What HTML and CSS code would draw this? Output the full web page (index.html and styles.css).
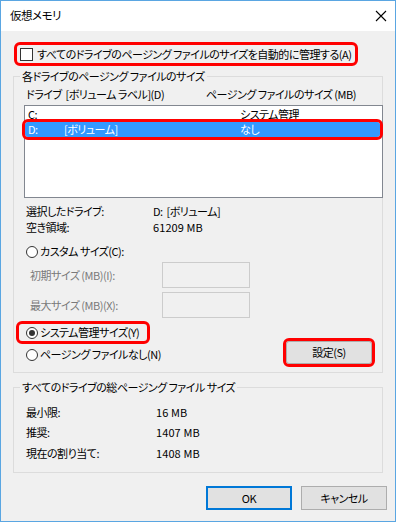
FILE: index.html
```html
<!DOCTYPE html>
<html lang="ja">
<head>
<meta charset="utf-8">
<title>仮想メモリ</title>
<link rel="stylesheet" href="styles.css">
</head>
<body>
<div class="window">
  <div class="titlebar">
    <span class="title">仮想メモリ</span>
    <svg class="close" width="12" height="12" viewBox="0 0 12 12"><path d="M1 1L11 11M11 1L1 11" stroke="#000" stroke-width="1.1" fill="none"/></svg>
  </div>
  <div class="content">
    <div class="check-row mark">
      <span class="checkbox"></span>
      <span class="label">すべてのドライブのページング ファイルのサイズを自動的に管理する(A)</span>
    </div>

    <fieldset class="group g1">
      <legend>各ドライブのページング ファイルのサイズ</legend>
      <div class="list-head">
        <span class="h-drive">ドライブ&nbsp;&nbsp;[ボリューム ラベル](D)</span>
        <span class="h-size">ページング ファイルのサイズ (MB)</span>
      </div>
      <div class="listbox">
        <div class="row"><span class="c-drive">C:</span><span class="c-label"></span><span class="c-size">システム管理</span></div>
        <div class="row sel mark"><span class="c-drive">D:</span><span class="c-label">[ボリューム]</span><span class="c-size">なし</span></div>
      </div>
      <div class="info">
        <span>選択したドライブ:</span><span>D:&nbsp;&nbsp;[ボリューム]</span>
        <span>空き領域:</span><span class="num">61209 MB</span>
      </div>
      <div class="radio-row r-custom"><span class="radio"></span><span>カスタム サイズ(C):</span></div>
      <div class="size-row first">
        <span class="size-label">初期サイズ (MB)(I):</span><span class="textbox"></span>
      </div>
      <div class="size-row">
        <span class="size-label">最大サイズ (MB)(X):</span><span class="textbox"></span>
      </div>
      <div class="radio-row r-system mark"><span class="radio checked"></span><span>システム管理サイズ(Y)</span></div>
      <div class="last-row">
        <div class="radio-row r-none"><span class="radio"></span><span>ページング ファイルなし(N)</span></div>
        <button class="btn set mark">設定(S)</button>
      </div>
    </fieldset>

    <fieldset class="group g2">
      <legend>すべてのドライブの総ページング ファイル サイズ</legend>
      <div class="totals">
        <span>最小限:</span><span class="num">16 MB</span>
        <span>推奨:</span><span class="num">1407 MB</span>
        <span>現在の割り当て:</span><span class="num">1408 MB</span>
      </div>
    </fieldset>

    <div class="buttons">
      <button class="btn ok">OK</button>
      <button class="btn">キャンセル</button>
    </div>
  </div>
</div>
</body>
</html>
```

FILE: styles.css
```css
* { box-sizing: border-box; }
html, body { margin: 0; padding: 0; }
body {
  width: 396px;
  height: 523px;
  font-family: "Noto Sans CJK JP", "Noto Sans", sans-serif;
  font-size: 11px;
  letter-spacing: -0.5px;
  line-height: 15px;
  font-feature-settings: "palt";
  white-space: nowrap;
  color: #000;
  background: #fff;
}
.window {
  width: 396px;
  height: 522px;
  border: 1px solid #5aa6e2;
  display: flex;
  flex-direction: column;
  background: #f0f0f0;
}
.titlebar {
  height: 30px;
  flex: none;
  background: #fff;
  display: flex;
  align-items: center;
  justify-content: space-between;
  padding: 0 8px 2px 9px;
}
.title { font-size: 11.5px; }
.close { display: block; margin-top: 2px; }

.content {
  flex: 1;
  padding: 14px 12px 0 12px;
  display: flex;
  flex-direction: column;
}

.mark {
  outline: 3px solid #ff0000;
  outline-offset: 0;
  border-radius: 3px;
}

.num { letter-spacing: 0.1px; }

.check-row {
  margin-left: 4px;
  width: 338px;
  height: 18px;
  display: flex;
  align-items: center;
  gap: 4px;
  padding-left: 3px;
}
.checkbox {
  width: 13px;
  height: 13px;
  border: 1px solid #333;
  background: #fff;
  flex: none;
}

.group {
  margin: 0;
  padding: 0;
  border: 1px solid #dcdcdc;
  min-width: 0;
}
.group legend {
  padding: 0 2px;
  margin-left: 6px;
  line-height: 15px;
}
.g1 {
  margin-top: 6px;
  padding-bottom: 8px;
}
.list-head {
  display: flex;
  padding-left: 12px;
  margin-top: 3px;
}
.h-drive { width: 180px; }

.listbox {
  margin: 3px 0 0 10px;
  width: 359px;
  height: 93px;
  background: #fff;
  border: 1px solid #828790;
  padding: 1px 2px 0 0;
}
.row {
  height: 15px;
  display: flex;
  padding-left: 3px;
}
.row.sel {
  background: #3399ff;
  color: #fff;
}
.c-drive { width: 36px; }
.c-label { width: 176px; }

.info {
  display: grid;
  grid-template-columns: 127px auto;
  grid-auto-rows: 16px;
  padding-left: 12px;
  margin-top: 6px;
}

.radio-row {
  display: flex;
  align-items: center;
  gap: 2px;
  height: 17px;
}
.radio {
  width: 12px;
  height: 12px;
  border-radius: 50%;
  border: 1px solid #333;
  background: #fff;
  flex: none;
  position: relative;
}
.radio.checked::after {
  content: "";
  position: absolute;
  left: 2px;
  top: 2px;
  width: 6px;
  height: 6px;
  border-radius: 50%;
  background: #333;
}
.r-custom {
  margin: 7px 0 0 12px;
}
.size-row {
  display: flex;
  align-items: center;
  padding-left: 16px;
  color: #7a7a7a;
  margin-top: 4px;
}
.size-row.first { margin-top: 2px; }
.size-label { width: 132px; }
.textbox {
  width: 88px;
  height: 26px;
  border: 1px solid #cccccc;
  background: #f0f0f0;
}
.r-system {
  margin: 6px 0 0 5px;
  width: 128px;
  padding-left: 7px;
}
.last-row {
  display: flex;
  align-items: center;
  justify-content: space-between;
  margin-top: 4px;
  padding-right: 10px;
  padding-left: 12px;
}
.btn {
  font: inherit;
  letter-spacing: inherit;
  font-feature-settings: "palt";
  color: #000;
  background: #e1e1e1;
  border: 1px solid #adadad;
  width: 86px;
  height: 23px;
  padding: 0;
  margin: 0;
}
.set { border-radius: 3px; margin-top: -4px; }

.g2 {
  margin-top: 7px;
  height: 93px;
}
.totals {
  display: grid;
  grid-template-columns: 130px auto;
  grid-auto-rows: 20.5px;
  align-items: center;
  padding-left: 12px;
  margin-top: 7px;
}

.buttons {
  display: flex;
  justify-content: flex-end;
  gap: 9px;
  margin-top: 13px;
  margin-right: -4px;
}
.buttons .btn { height: 24px; }
.ok {
  border: 2px solid #0078d7;
}
```
